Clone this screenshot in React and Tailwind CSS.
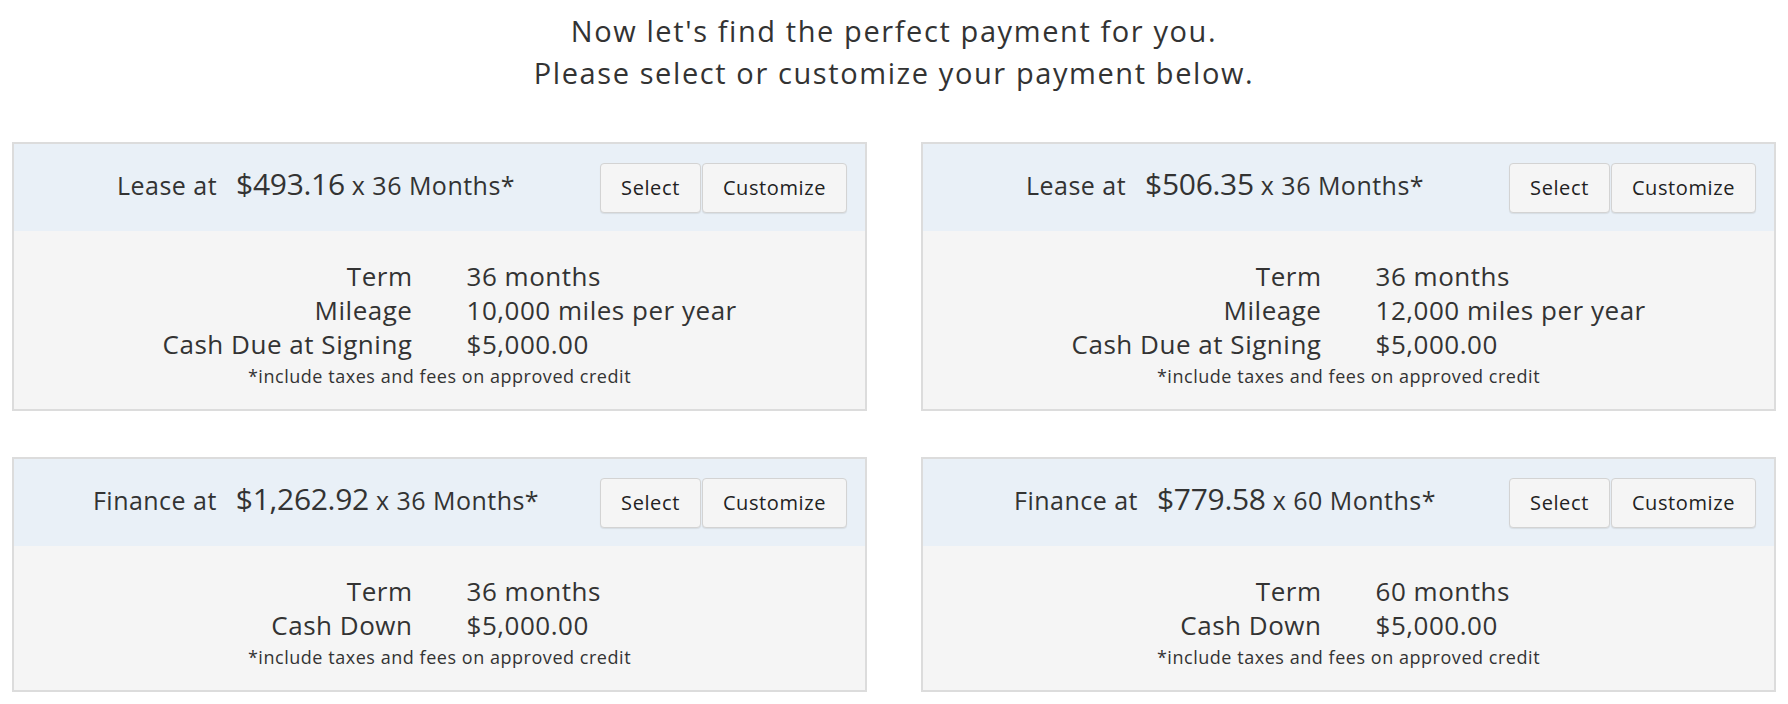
import React from 'react'

const options = [
  {
    kind: 'Lease',
    price: '$493.16',
    months: 36,
    rows: [
      ['Term', '36 months'],
      ['Mileage', '10,000 miles per year'],
      ['Cash Due at Signing', '$5,000.00'],
    ],
  },
  {
    kind: 'Lease',
    price: '$506.35',
    months: 36,
    rows: [
      ['Term', '36 months'],
      ['Mileage', '12,000 miles per year'],
      ['Cash Due at Signing', '$5,000.00'],
    ],
  },
  {
    kind: 'Finance',
    price: '$1,262.92',
    months: 36,
    rows: [
      ['Term', '36 months'],
      ['Cash Down', '$5,000.00'],
    ],
  },
  {
    kind: 'Finance',
    price: '$779.58',
    months: 60,
    rows: [
      ['Term', '60 months'],
      ['Cash Down', '$5,000.00'],
    ],
  },
]

export default function App() {
  return (
    <div className="min-h-screen bg-white pt-[10px] font-['Open_Sans',sans-serif] text-[#333]">
      <div className="text-center text-[29px] leading-[42px] tracking-[0.055em]">
        <p>Now let's find the perfect payment for you.</p>
        <p>Please select or customize your payment below.</p>
      </div>

      <div className="mt-[48px] grid grid-cols-2 gap-x-[54px] gap-y-[46px] px-[12px]">
        {options.map((option, index) => (
          <PaymentCard key={index} option={option} />
        ))}
      </div>
    </div>
  )
}

function PaymentCard({ option }) {
  return (
    <div className="border-2 border-[#dcdcdc]">
      <div className="flex h-[87px] items-center bg-[#e9f0f7] pr-[18px]">
        <div className="flex flex-1 items-baseline justify-center pb-[8px] pl-[18px] tracking-[0.03em]">
          <span className="text-[25px]">{option.kind} at</span>
          <span className="ml-[19px] text-[30px] font-medium tracking-[-0.01em]">{option.price}</span>
          <span className="ml-[7px] text-[25px]">x {option.months} Months*</span>
        </div>
        <div className="flex gap-[1px]">
          <Button>Select</Button>
          <Button>Customize</Button>
        </div>
      </div>

      <div className="bg-[#f5f5f5] pb-[18px] pt-[28px]">
        <div className="grid grid-cols-2 gap-x-[54px] text-[26px] leading-[34px] tracking-[0.02em]">
          {option.rows.map(([label, value]) => (
            <React.Fragment key={label}>
              <div className="text-right">{label}</div>
              <div>{value}</div>
            </React.Fragment>
          ))}
        </div>
        <p className="text-center text-[18px] leading-[30px] tracking-[0.03em]">*include taxes and fees on approved credit</p>
      </div>
    </div>
  )
}

function Button({ children }) {
  return (
    <button
      type="button"
      className="h-[50px] rounded-[4px] border border-[#d3d3d3] bg-[#f5f5f5] px-[20px] text-[20px] tracking-[0.03em] text-[#222] shadow-[0_1px_1px_rgba(0,0,0,0.08)]"
    >
      {children}
    </button>
  )
}
